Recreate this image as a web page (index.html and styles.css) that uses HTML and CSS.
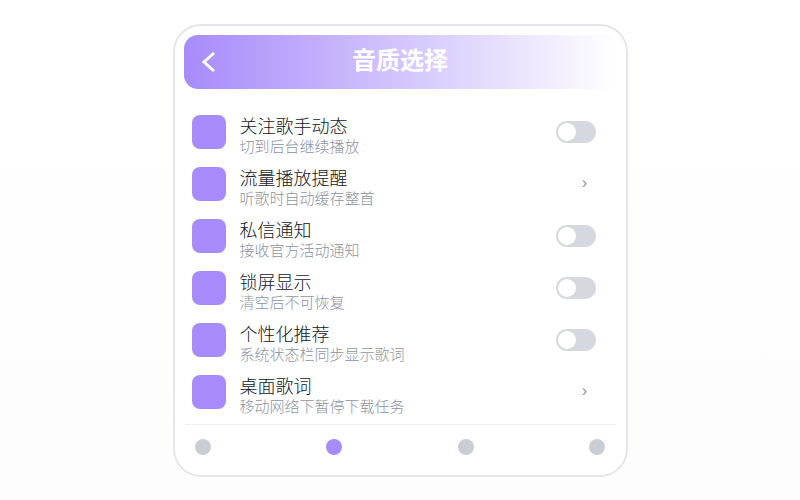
FILE: index.html
```html
<!DOCTYPE html>
<html lang="zh-CN">
<head>
  <meta charset="UTF-8">
  <meta name="viewport" content="width=device-width, initial-scale=1">
  <title>音质选择</title>
  <link rel="stylesheet" href="styles.css">
</head>
<body>
  <main class="card">
    <header class="header">
      <button class="back" type="button" aria-label="返回">
        <svg width="14" height="22" viewBox="0 0 14 22" fill="none" stroke="#fff" stroke-width="3">
          <path d="M13 2 3 11 13 20"/>
        </svg>
      </button>
      <h1>音质选择</h1>
    </header>

    <ul class="list">
      <li class="row">
        <span class="icon"></span>
        <label class="text" for="follow">
          <span class="title">关注歌手动态</span>
          <span class="desc">切到后台继续播放</span>
        </label>
        <input class="switch" type="checkbox" id="follow">
      </li>
      <li class="row">
        <span class="icon"></span>
        <label class="text" for="traffic">
          <span class="title">流量播放提醒</span>
          <span class="desc">听歌时自动缓存整首</span>
        </label>
        <button class="more" type="button" id="traffic">›</button>
      </li>
      <li class="row">
        <span class="icon"></span>
        <label class="text" for="message">
          <span class="title">私信通知</span>
          <span class="desc">接收官方活动通知</span>
        </label>
        <input class="switch" type="checkbox" id="message">
      </li>
      <li class="row">
        <span class="icon"></span>
        <label class="text" for="lock">
          <span class="title">锁屏显示</span>
          <span class="desc">清空后不可恢复</span>
        </label>
        <input class="switch" type="checkbox" id="lock">
      </li>
      <li class="row">
        <span class="icon"></span>
        <label class="text" for="recommend">
          <span class="title">个性化推荐</span>
          <span class="desc">系统状态栏同步显示歌词</span>
        </label>
        <input class="switch" type="checkbox" id="recommend">
      </li>
      <li class="row">
        <span class="icon"></span>
        <label class="text" for="lyrics">
          <span class="title">桌面歌词</span>
          <span class="desc">移动网络下暂停下载任务</span>
        </label>
        <button class="more" type="button" id="lyrics">›</button>
      </li>
    </ul>

    <nav class="tabs">
      <button class="tab" type="button" aria-label="首页"></button>
      <button class="tab active" type="button" aria-label="音乐"></button>
      <button class="tab" type="button" aria-label="发现"></button>
      <button class="tab" type="button" aria-label="我的"></button>
    </nav>
  </main>
</body>
</html>
```
FILE: styles.css
```css
* {
  box-sizing: border-box;
}

body {
  margin: 0;
  min-height: 100vh;
  padding: 24px 24px 20px;
  background: linear-gradient(#fff, #fdfdfd);
  font-family: "Liberation Sans", "Noto Sans CJK SC", sans-serif;
}

button {
  padding: 0;
  border: none;
  background: none;
  font-family: inherit;
  cursor: pointer;
}

.card {
  max-width: 455px;
  margin: 0 auto;
  padding: 9px 9px 6px;
  background: #fff;
  border: 2px solid #e5e6eb;
  border-radius: 28px;
}

.header {
  display: grid;
  grid-template-columns: 48px 1fr 48px;
  align-items: center;
  height: 54px;
  border-radius: 14px;
  background: linear-gradient(90deg, #a78bfa, #fff);
}

.back {
  display: flex;
  justify-content: center;
}

h1 {
  margin: 0;
  padding-bottom: 2px;
  color: #fff;
  font-size: 24px;
  font-weight: 700;
  line-height: 32px;
  text-align: center;
}

.list {
  margin: 0;
  padding: 17px 21px 6px 8px;
  list-style: none;
}

.row {
  display: flex;
  align-items: center;
  height: 52px;
}

.icon {
  width: 34px;
  height: 34px;
  margin-right: 14px;
  border-radius: 8px;
  background: #a78bfa;
}

.text {
  display: flex;
  flex: 1;
  flex-direction: column;
  padding-top: 10px;
  font-weight: 300;
}

.title {
  color: #111827;
  font-size: 18px;
  line-height: 20px;
}

.desc {
  color: #8b93a1;
  font-size: 15px;
  line-height: 20px;
}

.switch {
  display: flex;
  align-items: center;
  width: 40px;
  height: 22px;
  margin: 0;
  padding: 2px;
  appearance: none;
  border-radius: 11px;
  background: #d5d8df;
  cursor: pointer;
}

.switch::before {
  content: "";
  width: 18px;
  height: 18px;
  border-radius: 50%;
  background: #fff;
}

.switch:checked {
  justify-content: flex-end;
  background: #a78bfa;
}

.more {
  width: 22px;
  padding-bottom: 2px;
  color: #8b93a1;
  font-size: 16px;
  line-height: 20px;
}

.tabs {
  display: flex;
  justify-content: space-between;
  margin: 0 1px;
  padding: 14px 10px;
  border-top: 1px solid #f0f0f3;
}

.tab {
  width: 16px;
  height: 16px;
  border-radius: 50%;
  background: #c9cdd4;
}

.tab.active {
  background: #a78bfa;
}
```
